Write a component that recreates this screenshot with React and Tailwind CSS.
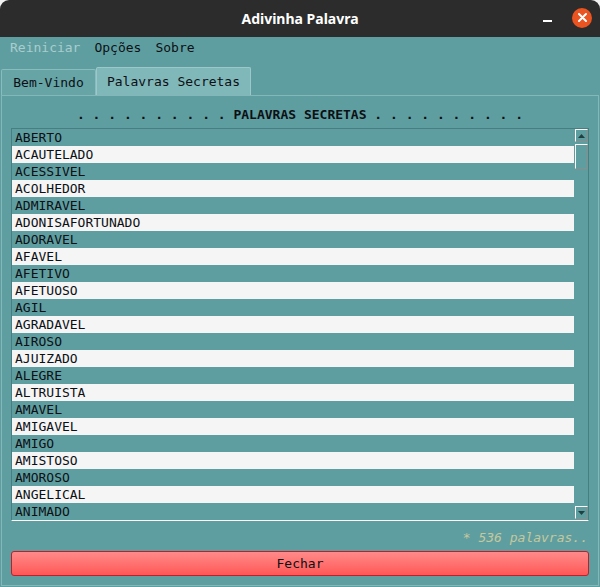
import React from 'react';

const words = [
  'ABERTO', 'ACAUTELADO', 'ACESSIVEL', 'ACOLHEDOR', 'ADMIRAVEL', 'ADONISAFORTUNADO',
  'ADORAVEL', 'AFAVEL', 'AFETIVO', 'AFETUOSO', 'AGIL', 'AGRADAVEL', 'AIROSO',
  'AJUIZADO', 'ALEGRE', 'ALTRUISTA', 'AMAVEL', 'AMIGAVEL', 'AMIGO', 'AMISTOSO',
  'AMOROSO', 'ANGELICAL', 'ANIMADO',
];

const mono = "font-['DejaVu_Sans_Mono',monospace]";

const ScrollButton = ({ up }) => (
  <div className="w-[13px] h-[13px] ml-[1px] border-t border-l border-white border-r border-b border-r-[#8c8c8c] border-b-[#8c8c8c] flex items-center justify-center">
    <svg width="7" height="4" viewBox="0 0 7 4">
      {up ? (
        <polygon points="3.5,0 7,4 0,4" fill="#1f3f40" />
      ) : (
        <polygon points="0,0 7,0 3.5,4" fill="#1f3f40" />
      )}
    </svg>
  </div>
);

const App = () => {
  return (
    <div className={`w-[600px] h-[587px] bg-[#f2f2f2] ${mono} text-[13px] text-[#0c1014]`}>
      {/* Title bar */}
      <div className="h-[37px] bg-[#2c2c2c] rounded-t-[9px] flex items-center">
        <div className="w-[120px]" />
        <div className="flex-1 text-center text-white font-bold text-[14px] font-['Noto_Sans',sans-serif]">
          Adivinha Palavra
        </div>
        <div className="w-[120px] flex items-center justify-end pr-[8px] gap-[20px]">
          <div className="w-[9px] h-[2px] bg-white mt-[4px]" />
          <div className="w-[20px] h-[20px] rounded-full bg-[#e95420] flex items-center justify-center -mt-[2px]">
            <svg width="9" height="9" viewBox="0 0 9 9">
              <path d="M1 1 L8 8 M8 1 L1 8" stroke="white" strokeWidth="2" strokeLinecap="round" />
            </svg>
          </div>
        </div>
      </div>

      {/* Body */}
      <div className="h-[550px] bg-[#5f9ea0] flex flex-col">
        {/* Menu */}
        <div className="h-[21px] flex items-center pl-[10px] gap-[14px]">
          <span className="text-[#a9cdce]">Reiniciar</span>
          <span>Opções</span>
          <span>Sobre</span>
        </div>

        {/* Tabs */}
        <div className="flex items-end pl-[1px] mt-[9px] h-[28px]">
          <div className="h-[26px] w-[95px] bg-[#66a4a6] border border-b-0 border-[#88bcbe] rounded-t-[2px] flex items-center justify-center pt-[1px]">
            Bem-Vindo
          </div>
          <div className="h-[28px] w-[155px] bg-[#80b7b9] border border-b-0 border-[#9cc8ca] rounded-t-[2px] flex items-center justify-center">
            Palavras Secretas
          </div>
        </div>

        {/* Panel */}
        <div className="flex-1 mx-[1px] mb-[1px] border border-[#84b7b9] flex flex-col px-[9px]">
          <div className="h-[17px] mt-[10px] leading-[17px] text-center font-bold whitespace-pre">
            . . . . . . . . . . PALAVRAS SECRETAS . . . . . . . . . .
          </div>

          {/* List */}
          <div className="mt-[5px] h-[393px] border-t border-l border-r border-[#467f81] border-b border-b-white flex">
            <div className="flex-1 flex flex-col">
              {words.map((w, i) => (
                <div
                  key={w}
                  className={`h-[17px] leading-[17px] pl-[3px] ${i % 2 === 1 ? 'bg-[#f5f5f5]' : ''}`}
                >
                  {w}
                </div>
              ))}
            </div>
            <div className="w-[14px] flex flex-col pb-[1px]">
              <ScrollButton up />
              <div className="w-[13px] h-[25px] ml-[1px] mt-[2px] border-t border-l border-white border-r border-b border-r-[#8c8c8c] border-b-[#8c8c8c]" />
              <div className="flex-1" />
              <ScrollButton />
            </div>
          </div>

          {/* Footer */}
          <div className="mt-[8px] h-[17px] leading-[17px] text-right italic text-[#c6c89c] pr-[1px]">
            * 536 palavras..
          </div>

          <button className="mt-[5px] h-[25px] w-full rounded-[3px] border border-[#c01f28] bg-gradient-to-b from-[#ff8a8a] to-[#ff5656] text-[#0c1014] flex items-center justify-center">
            Fechar
          </button>
        </div>
      </div>
    </div>
  );
};

export default App;
